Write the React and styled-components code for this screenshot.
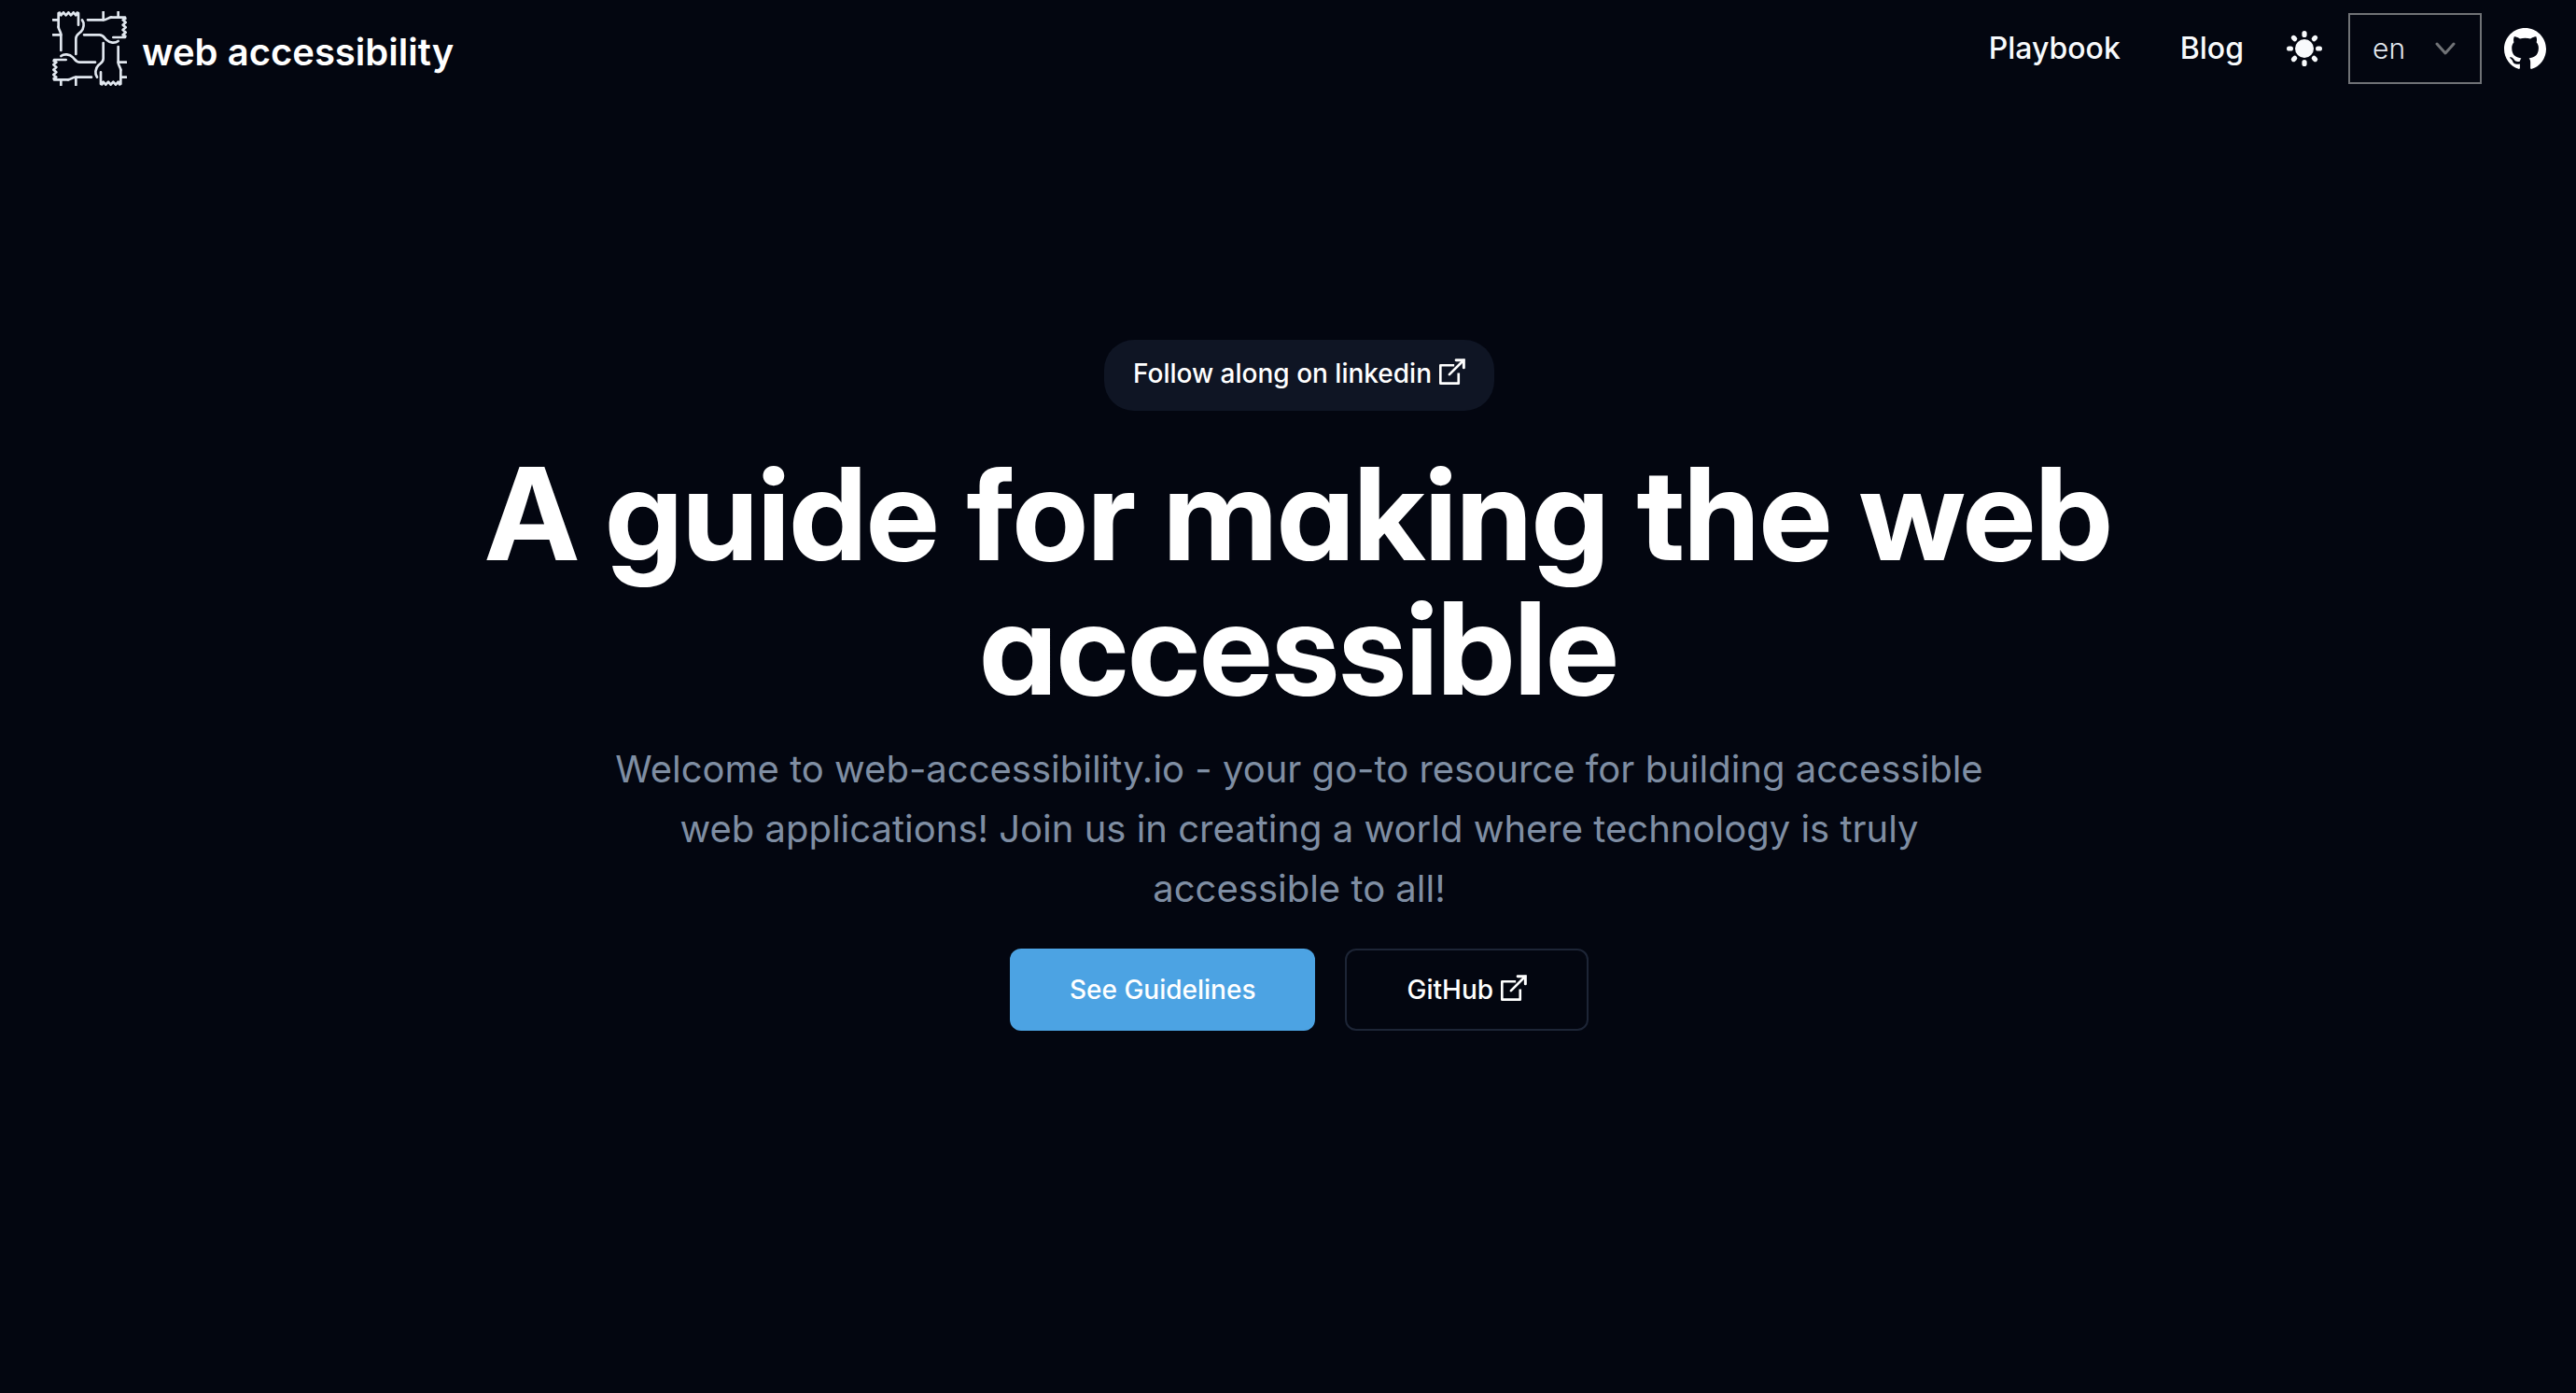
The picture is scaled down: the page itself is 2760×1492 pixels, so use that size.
import React from "react";
import styled, { createGlobalStyle } from "styled-components";

const GlobalStyle = createGlobalStyle`
  *, *::before, *::after { box-sizing: border-box; }
  body {
    margin: 0;
    background: #030610;
    color: #ffffff;
    font-family: "Inter", "Liberation Sans", sans-serif;
    -webkit-font-smoothing: antialiased;
  }
  a { color: inherit; text-decoration: none; }
  svg { display: block; flex-shrink: 0; }
`;

const Page = styled.div`
  display: flex;
  flex-direction: column;
  min-height: 100vh;
`;

const Header = styled.header`
  display: flex;
  align-items: center;
  justify-content: space-between;
  height: 104px;
  padding: 0 32px 0 56px;
`;

const Brand = styled.a`
  display: flex;
  align-items: center;
  gap: 16px;
`;

const BrandName = styled.span`
  padding-top: 8px;
  font-size: 40px;
  line-height: 48px;
  font-weight: 600;
`;

const Nav = styled.nav`
  display: flex;
  align-items: center;
  gap: 64px;
  color: #f8fafc;
  font-size: 32px;
  line-height: 48px;
  font-weight: 500;
`;

const Tools = styled.div`
  display: flex;
  align-items: center;
  gap: 24px;
`;

const HeaderRight = styled.div`
  display: flex;
  align-items: center;
  gap: 42px;
`;

const IconButton = styled.button`
  display: flex;
  padding: 4px;
  border: 0;
  background: none;
  color: #f8fafc;
  cursor: pointer;
`;

const SelectBox = styled.div`
  position: relative;
`;

const Select = styled.select`
  display: block;
  width: 143px;
  height: 76px;
  padding: 0 24px;
  appearance: none;
  border: 2px solid #707276;
  border-radius: 0;
  background: transparent;
  color: #e1e7ef;
  font-family: inherit;
  font-size: 30px;
  font-weight: 300;
`;

const Chevron = styled.svg`
  position: absolute;
  top: 30px;
  right: 28px;
  pointer-events: none;
`;

const Hero = styled.main`
  display: flex;
  flex-direction: column;
  align-items: center;
  gap: 32px;
  padding: 260px 0 96px 24px;
  text-align: center;
`;

const Pill = styled.a`
  display: inline-flex;
  align-items: center;
  gap: 8px;
  padding: 12px 31px 16px;
  border-radius: 32px;
  background: #0f1524;
  font-size: 28px;
  line-height: 48px;
  font-weight: 500;
`;

const Title = styled.h1`
  max-width: 2048px;
  margin: 0 0 -6px;
  padding-top: 6px;
  font-family: "Inter Display", "Inter", sans-serif;
  font-size: 138px;
  line-height: 144px;
  font-weight: 700;
  font-feature-settings: "cv11";
`;

const Lead = styled.p`
  max-width: 1480px;
  margin: 0;
  color: #7f8ea3;
  font-size: 40px;
  line-height: 64px;
`;

const Actions = styled.div`
  display: flex;
  gap: 32px;
`;

const ButtonLink = styled.a`
  display: inline-flex;
  align-items: center;
  gap: 8px;
  height: 88px;
  padding: 0 64px;
  border: ${(p) => (p.$primary ? "0" : "2px solid #1d2536")};
  border-radius: 12px;
  background: ${(p) => (p.$primary ? "#4ca3e3" : "transparent")};
  font-size: 28px;
  font-weight: 500;
`;

const ExternalSvg = styled.svg`
  margin-bottom: 4px;
`;

function ExternalIcon() {
  return (
    <ExternalSvg width="28" height="28" viewBox="25 15 85 85" fill="none" stroke="currentColor" strokeWidth="8" aria-hidden="true">
      <path d="M74 37H29V96H88V62" strokeLinejoin="round" />
      <path d="M58 67L104 21" strokeLinecap="round" />
      <path d="M80 20H105V45" strokeLinecap="round" strokeWidth="9" />
    </ExternalSvg>
  );
}

const armPaths = [
  "M68 88V42L72 41L76 49L84 40L92 49L100 40L108 49L116 40L124 49L128 41L132 42V80",
  "M68 86C68 96 76 100 76 112V162",
  "M144 64C152 74 150 92 140 102C132 110 124 112 124 124V174",
  "M50 64H68M50 112H76",
];

function Logo() {
  return (
    <svg width="80" height="80" viewBox="48 36 240 240" fill="none" stroke="#e1e7ef" strokeWidth="8" strokeLinecap="round" strokeLinejoin="round" aria-hidden="true">
      {[0, 90, 180, 270].map((angle) => (
        <g key={angle} transform={`rotate(${angle} 168 156)`}>
          {armPaths.map((d) => (
            <path key={d} d={d} />
          ))}
        </g>
      ))}
    </svg>
  );
}

function SunIcon() {
  return (
    <svg width="38" height="38" viewBox="-19 -19 38 38" aria-hidden="true">
      <circle r="10" fill="currentColor" />
      {[0, 45, 90, 135, 180, 225, 270, 315].map((angle) => (
        <path key={angle} d="M0 -14.6V-16.4" stroke="currentColor" strokeWidth="5.2" strokeLinecap="round" transform={`rotate(${angle})`} />
      ))}
    </svg>
  );
}

function GithubIcon() {
  return (
    <svg width="45" height="45" viewBox="0 0 16 16" fill="currentColor" aria-hidden="true">
      <path d="M8 0C3.58 0 0 3.58 0 8c0 3.54 2.29 6.53 5.47 7.59.4.07.55-.17.55-.38 0-.19-.01-.82-.01-1.49-2.01.37-2.53-.49-2.69-.94-.09-.23-.48-.94-.82-1.13-.28-.15-.68-.52-.01-.53.63-.01 1.08.58 1.23.82.72 1.21 1.87.87 2.33.66.07-.52.28-.87.51-1.07-1.78-.2-3.64-.89-3.64-3.95 0-.87.31-1.59.82-2.15-.08-.2-.36-1.02.08-2.12 0 0 .67-.21 2.2.82.64-.18 1.32-.27 2-.27.68 0 1.36.09 2 .27 1.53-1.04 2.2-.82 2.2-.82.44 1.1.16 1.92.08 2.12.51.56.82 1.27.82 2.15 0 3.07-1.87 3.75-3.65 3.95.29.25.54.73.54 1.48 0 1.07-.01 1.93-.01 2.2 0 .21.15.46.55.38A8.013 8.013 0 0016 8c0-4.42-3.58-8-8-8z" />
    </svg>
  );
}

export default function App() {
  return (
    <Page>
      <GlobalStyle />
      <Header>
        <Brand href="#home">
          <Logo />
          <BrandName>web accessibility</BrandName>
        </Brand>
        <HeaderRight>
          <Nav>
            <a href="#playbook">Playbook</a>
            <a href="#blog">Blog</a>
          </Nav>
          <Tools>
            <IconButton type="button" aria-label="Toggle theme">
              <SunIcon />
            </IconButton>
            <SelectBox>
              <Select aria-label="Language" defaultValue="en">
                <option value="en">en</option>
              </Select>
              <Chevron width="22" height="16" viewBox="0 0 22 16" fill="none" stroke="#707276" strokeWidth="3" strokeLinecap="round" strokeLinejoin="round" aria-hidden="true">
                <path d="M2 3L11 13L20 3" />
              </Chevron>
            </SelectBox>
            <a href="#github" aria-label="GitHub repository">
              <GithubIcon />
            </a>
          </Tools>
        </HeaderRight>
      </Header>
      <Hero>
        <Pill href="#linkedin">
          Follow along on linkedin
          <ExternalIcon />
        </Pill>
        <Title>A guide for making the web accessible</Title>
        <Lead>
          Welcome to web-accessibility.io - your go-to resource for building accessible web
          applications! Join us in creating a world where technology is truly accessible to all!
        </Lead>
        <Actions>
          <ButtonLink $primary href="#guidelines">
            See Guidelines
          </ButtonLink>
          <ButtonLink href="#github">
            GitHub
            <ExternalIcon />
          </ButtonLink>
        </Actions>
      </Hero>
    </Page>
  );
}
